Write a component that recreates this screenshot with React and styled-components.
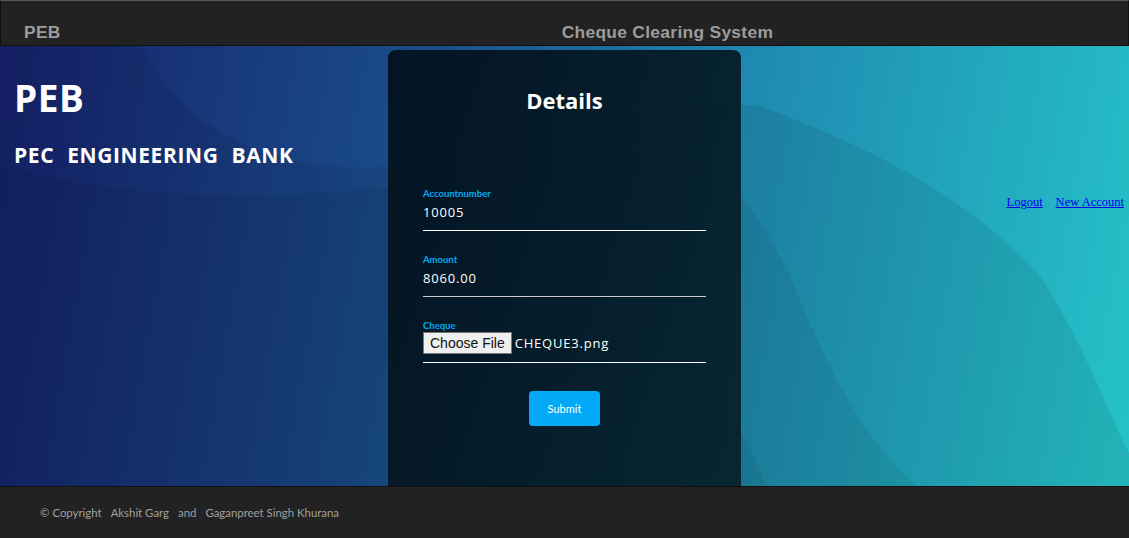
import React from 'react'
import styled, { createGlobalStyle } from 'styled-components'

const GlobalStyle = createGlobalStyle`
  html, body {
    margin: 0;
    padding: 0;
    background: #222;
  }
  * {
    box-sizing: border-box;
  }
`

const Page = styled.div`
  width: 1129px;
  height: 538px;
  display: flex;
  flex-direction: column;
  overflow: hidden;
  font-family: 'Open Sans', 'Noto Sans', sans-serif;
`

const TopBar = styled.header`
  height: 46px;
  flex: none;
  display: flex;
  align-items: flex-end;
  gap: 501px;
  padding: 0 0 2px 23px;
  background: #222;
  border: 1px solid #111;
  border-top-color: #5a5a5a;
  color: #9c9c9c;
  font-family: 'Liberation Sans', Arial, sans-serif;
  font-weight: bold;
  font-size: 17.4px;
  letter-spacing: 0.3px;
`

const Main = styled.main`
  position: relative;
  flex: 1;
  display: grid;
  grid-template-columns: 1fr 353px 1fr;
  padding-top: 4px;
  background: linear-gradient(100deg, #15216a 0%, #1a4c8a 35%, #1f88b0 62%, #25c3c8 100%);
  overflow: hidden;
`

const Waves = styled.svg`
  position: absolute;
  inset: 0;
  width: 100%;
  height: 100%;
  pointer-events: none;
`

const Brand = styled.div`
  position: relative;
  padding: 29px 0 0 14px;
  color: #fff;
  font-weight: bold;
`

const BrandMark = styled.div`
  font-size: 37px;
  line-height: 1;
  letter-spacing: 0.5px;
`

const BrandName = styled.div`
  margin-top: 25px;
  font-size: 21px;
  word-spacing: 7px;
  letter-spacing: 0.6px;
`

const Card = styled.section`
  position: relative;
  display: flex;
  flex-direction: column;
  padding: 35px 35px 0;
  background: linear-gradient(110deg, rgba(3, 18, 32, 0.97), rgba(6, 32, 42, 0.92));
  border-radius: 8px 8px 0 0;
`

const Title = styled.h2`
  margin: 0 0 70px;
  text-align: center;
  color: #fff;
  font-size: 22px;
  font-weight: bold;
`

const Field = styled.div`
  display: flex;
  flex-direction: column;
  height: 46px;
  border-bottom: 1.5px solid ${(p) => (p.dim ? '#c9c9c9' : '#fff')};
  margin-bottom: 20px;
`

const Label = styled.label`
  color: #03a9f4;
  font-family: Lato, 'Open Sans', sans-serif;
  font-size: 9.5px;
  font-weight: bold;
  margin-top: 3px;
`

const Value = styled.div`
  margin-top: 4px;
  color: #fff;
  font-size: 13px;
  letter-spacing: 0.8px;
`

const FileRow = styled.div`
  display: flex;
  align-items: center;
  margin-top: 1px;
  color: #fff;
  font-size: 13px;
  letter-spacing: 0.8px;
`

const FileButton = styled.span`
  display: inline-flex;
  align-items: center;
  height: 22px;
  padding: 0 6px;
  margin-right: 3px;
  background: #efefef;
  border: 1px solid #767676;
  color: #111;
  font-family: 'Liberation Sans', Arial, sans-serif;
  font-size: 14px;
  letter-spacing: 0;
`

const Submit = styled.button`
  align-self: center;
  width: 71px;
  height: 35px;
  margin-top: 8px;
  border: none;
  border-radius: 4px;
  background: #03a9f4;
  color: #fff;
  font-family: Lato, 'Open Sans', sans-serif;
  font-size: 11px;
`

const Links = styled.nav`
  position: relative;
  display: flex;
  justify-content: flex-end;
  gap: 13px;
  padding: 145px 5px 0 0;
  font-family: 'Liberation Serif', 'Times New Roman', serif;
  font-size: 12.5px;

  a {
    color: #0000ee;
    text-decoration: underline;
  }
`

const Footer = styled.footer`
  height: 52px;
  flex: none;
  display: flex;
  align-items: center;
  gap: 9px;
  padding-left: 40px;
  background: #222;
  border-top: 1px solid #111;
  color: #a0a0a0;
  font-family: Lato, 'Open Sans', sans-serif;
  font-size: 11.4px;
`

export default function App() {
  return (
    <Page>
      <GlobalStyle />
      <TopBar>
        <span>PEB</span>
        <span>Cheque Clearing System</span>
      </TopBar>
      <Main>
        <Waves viewBox="0 0 1129 440" preserveAspectRatio="none">
          <path
            d="M0 0 L143 0 C170 60 230 110 330 120 C420 130 500 90 600 75 C680 62 720 55 760 60 C840 90 960 140 1040 230 C1080 290 1110 370 1129 407 L1129 440 L0 440 Z"
            fill="#000"
            fillOpacity="0.08"
          />
          <path
            d="M700 111 C730 130 760 170 790 230 C820 300 850 380 917 440 L0 440 L0 120 C300 200 600 90 700 111 Z"
            fill="#000"
            fillOpacity="0.06"
          />
          <path
            d="M700 337 C730 360 750 400 767 440 L700 440 Z"
            fill="#000"
            fillOpacity="0.06"
          />
        </Waves>
        <Brand>
          <BrandMark>PEB</BrandMark>
          <BrandName>PEC ENGINEERING BANK</BrandName>
        </Brand>
        <Card>
          <Title>Details</Title>
          <Field>
            <Label>Accountnumber</Label>
            <Value>10005</Value>
          </Field>
          <Field dim>
            <Label>Amount</Label>
            <Value>8060.00</Value>
          </Field>
          <Field>
            <Label>Cheque</Label>
            <FileRow>
              <FileButton>Choose File</FileButton>
              CHEQUE3.png
            </FileRow>
          </Field>
          <Submit>Submit</Submit>
        </Card>
        <Links>
          <a href="#logout">Logout</a>
          <a href="#new">New Account</a>
        </Links>
      </Main>
      <Footer>
        <span>© Copyright</span>
        <span>Akshit Garg</span>
        <span>and</span>
        <span>Gaganpreet Singh Khurana</span>
      </Footer>
    </Page>
  )
}
